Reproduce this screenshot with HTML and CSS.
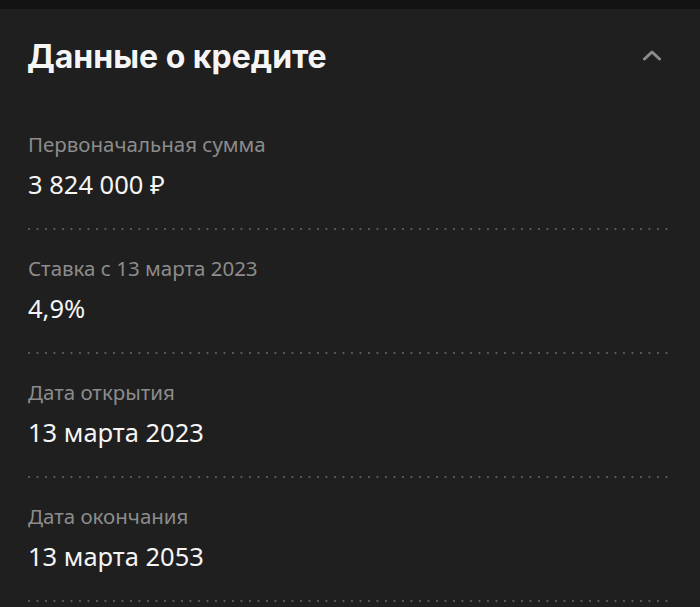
FILE: index.html
```html
<!DOCTYPE html>
<html lang="ru">
<head>
    <meta charset="UTF-8">
    <meta name="viewport" content="width=device-width, initial-scale=1.0">
    <title>Данные о кредите</title>
    <link rel="stylesheet" href="styles.css">
</head>
<body>
    <div class="top-strip"></div>
    <section class="card">
        <div class="card-header">
            <h1>Данные о кредите</h1>
            <button class="toggle" type="button" aria-label="Свернуть">
                <svg width="20" height="12" viewBox="0 0 20 12">
                    <path d="M2.5 10 L10 3 L17.5 10" fill="none" stroke="#8c8c8c" stroke-width="3" stroke-linecap="round" stroke-linejoin="round"/>
                </svg>
            </button>
        </div>
        <div class="row">
            <p class="label">Первоначальная сумма</p>
            <p class="value">3 824 000 ₽</p>
        </div>
        <div class="row">
            <p class="label">Ставка с 13 марта 2023</p>
            <p class="value">4,9%</p>
        </div>
        <div class="row">
            <p class="label">Дата открытия</p>
            <p class="value">13 марта 2023</p>
        </div>
        <div class="row">
            <p class="label">Дата окончания</p>
            <p class="value">13 марта 2053</p>
        </div>
    </section>
</body>
</html>
```

FILE: styles.css
```css
body {
    margin: 0;
    background-color: #1f1f1f;
    font-family: "Noto Sans", "Open Sans", sans-serif;
}
.top-strip {
    height: 9px;
    background-color: #131313;
}
.card {
    padding: 0 32px 0 28px;
}
.card-header {
    display: flex;
    justify-content: space-between;
    align-items: center;
    padding: 29px 0 30px;
}
h1 {
    margin: 0 0 0 -1px;
    font-family: Inter, "Noto Sans", sans-serif;
    font-weight: 700;
    font-size: 32px;
    line-height: 38px;
    color: #f5f5f5;
}
.toggle {
    background: none;
    border: none;
    padding: 0;
    margin-right: 6px;
    margin-top: -4px;
    display: flex;
    cursor: pointer;
}
.row {
    padding: 25px 0 29px;
    background-image: linear-gradient(to right, #595959 2px, transparent 2px);
    background-size: 8.5px 2px;
    background-repeat: repeat-x;
    background-position: left bottom;
}
.label {
    margin: 0;
    font-size: 20.5px;
    line-height: 26px;
    color: #8c8c8c;
}
.value {
    margin: 10px 0 0;
    font-size: 25.5px;
    line-height: 34px;
    color: #f5f5f5;
}
```
